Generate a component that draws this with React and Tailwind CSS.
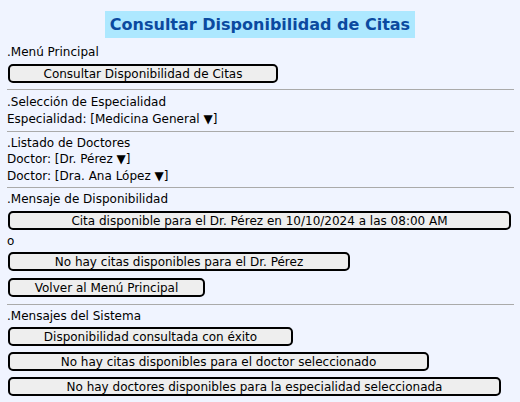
const font = { fontFamily: '"DejaVu Sans", sans-serif' };

const Label = ({ children, className = "" }) => (
  <div className={`h-[16px] leading-[16px] text-[12px] text-black pl-[7px] whitespace-nowrap ${className}`}>
    {children}
  </div>
);

const Btn = ({ children, w, className = "" }) => (
  <div
    className={`h-[19px] ml-[8px] box-border border-2 border-black rounded-[5px] bg-[#eeeeee] flex items-center justify-center text-[12px] leading-none text-black whitespace-nowrap ${className}`}
    style={{ width: w }}
  >
    {children}
  </div>
);

const Sep = ({ className = "" }) => (
  <div className={`h-px ml-[7px] w-[507px] bg-[#aaaaaa] ${className}`} />
);

export default function App() {
  return (
    <div className="w-[520px] h-[402px] bg-[#f0f4ff] overflow-hidden flex flex-col" style={font}>
      <div className="flex justify-center pt-[11px]">
        <div className="w-[310px] h-[27px] bg-[#ade8ff] flex items-center justify-center text-[16px] font-bold text-[#0b4aa0] whitespace-nowrap">
          Consultar Disponibilidad de Citas
        </div>
      </div>

      <Label className="mt-[6px]">.Menú Principal</Label>
      <Btn w={270} className="mt-[4px] ml-[7px]">Consultar Disponibilidad de Citas</Btn>
      <Sep className="mt-[6px]" />

      <Label className="mt-[4px]">.Selección de Especialidad</Label>
      <Label className="mt-[1px]">Especialidad: [Medicina General ▼]</Label>
      <Sep className="mt-[4px]" />

      <Label className="mt-[3px]">.Listado de Doctores</Label>
      <Label>Doctor: [Dr. Pérez ▼]</Label>
      <Label className="mt-[1px]">Doctor: [Dra. Ana López ▼]</Label>
      <Sep className="mt-[3px]" />

      <Label className="mt-[3px]">.Mensaje de Disponibilidad</Label>
      <Btn w={503} className="mt-[4px]">Cita disponible para el Dr. Pérez en 10/10/2024 a las 08:00 AM</Btn>
      <Label className="mt-[3px]">o</Label>
      <Btn w={342} className="mt-[3px]">No hay citas disponibles para el Dr. Pérez</Btn>
      <Btn w={197} className="mt-[7px]">Volver al Menú Principal</Btn>
      <Sep className="mt-[7px]" />

      <Label className="mt-[3px]">.Mensajes del Sistema</Label>
      <Btn w={285} className="mt-[3px]">Disponibilidad consultada con éxito</Btn>
      <Btn w={421} className="mt-[6px]">No hay citas disponibles para el doctor seleccionado</Btn>
      <Btn w={493} className="mt-[6px]">No hay doctores disponibles para la especialidad seleccionada</Btn>
    </div>
  );
}
